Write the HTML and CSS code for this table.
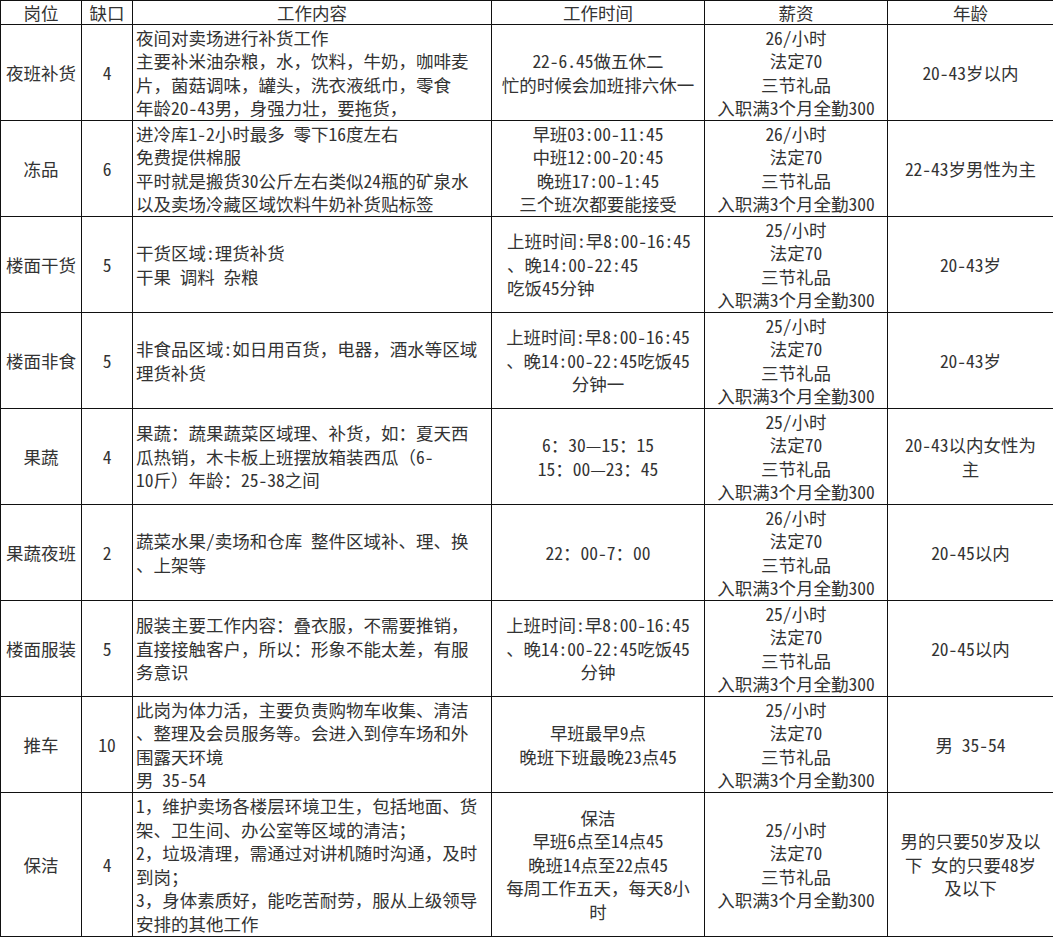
FILE: index.html
```html
<!DOCTYPE html>
<html lang="zh-CN">
<head>
<meta charset="utf-8">
<title>岗位招聘</title>
<link rel="stylesheet" href="styles.css">
</head>
<body>
<table class="sheet">
  <colgroup>
    <col class="c-pos">
    <col class="c-num">
    <col class="c-job">
    <col class="c-time">
    <col class="c-pay">
    <col class="c-age">
  </colgroup>
  <thead>
    <tr class="head">
      <th>岗位</th><th>缺口</th><th>工作内容</th><th>工作时间</th><th>薪资</th><th>年龄</th>
    </tr>
  </thead>
  <tbody>
    <tr class="row">
      <td class="ctr">夜班补货</td>
      <td class="ctr">4</td>
      <td class="left">夜间对卖场进行补货工作<br>主要补米油杂粮，水，饮料，牛奶，咖啡麦<br>片，菌菇调味，罐头，洗衣液纸巾，零食<br>年龄20-43男，身强力壮，要拖货，</td>
      <td class="ctr">22-6.45做五休二<br>忙的时候会加班排六休一</td>
      <td class="ctr">26/小时<br>法定70<br>三节礼品<br>入职满3个月全勤300</td>
      <td class="ctr">20-43岁以内</td>
    </tr>
    <tr class="row">
      <td class="ctr">冻品</td>
      <td class="ctr">6</td>
      <td class="left">进冷库1-2小时最多 零下16度左右<br>免费提供棉服<br>平时就是搬货30公斤左右类似24瓶的矿泉水<br>以及卖场冷藏区域饮料牛奶补货贴标签</td>
      <td class="ctr">早班03:00-11:45<br>中班12:00-20:45<br>晚班17:00-1:45<br>三个班次都要能接受</td>
      <td class="ctr">26/小时<br>法定70<br>三节礼品<br>入职满3个月全勤300</td>
      <td class="ctr">22-43岁男性为主</td>
    </tr>
    <tr class="row">
      <td class="ctr">楼面干货</td>
      <td class="ctr">5</td>
      <td class="left">干货区域:理货补货<br>干果 调料 杂粮</td>
      <td class="indent">上班时间:早8:00-16:45<br>、晚14:00-22:45<br>吃饭45分钟</td>
      <td class="ctr">25/小时<br>法定70<br>三节礼品<br>入职满3个月全勤300</td>
      <td class="ctr">20-43岁</td>
    </tr>
    <tr class="row">
      <td class="ctr">楼面非食</td>
      <td class="ctr">5</td>
      <td class="left">非食品区域:如日用百货，电器，酒水等区域<br>理货补货</td>
      <td class="ctr">上班时间:早8:00-16:45<br>、晚14:00-22:45吃饭45<br>分钟一</td>
      <td class="ctr">25/小时<br>法定70<br>三节礼品<br>入职满3个月全勤300</td>
      <td class="ctr">20-43岁</td>
    </tr>
    <tr class="row">
      <td class="ctr">果蔬</td>
      <td class="ctr">4</td>
      <td class="left">果蔬：蔬果蔬菜区域理、补货，如：夏天西<br>瓜热销，木卡板上班摆放箱装西瓜（6-<br>10斤）年龄：25-38之间</td>
      <td class="ctr">6：30—15：15<br>15：00—23：45</td>
      <td class="ctr">25/小时<br>法定70<br>三节礼品<br>入职满3个月全勤300</td>
      <td class="ctr">20-43以内女性为<br>主</td>
    </tr>
    <tr class="row">
      <td class="ctr">果蔬夜班</td>
      <td class="ctr">2</td>
      <td class="left">蔬菜水果/卖场和仓库 整件区域补、理、换<br>、上架等</td>
      <td class="ctr">22：00-7：00</td>
      <td class="ctr">26/小时<br>法定70<br>三节礼品<br>入职满3个月全勤300</td>
      <td class="ctr">20-45以内</td>
    </tr>
    <tr class="row">
      <td class="ctr">楼面服装</td>
      <td class="ctr">5</td>
      <td class="left">服装主要工作内容：叠衣服，不需要推销，<br>直接接触客户，所以：形象不能太差，有服<br>务意识</td>
      <td class="ctr">上班时间:早8:00-16:45<br>、晚14:00-22:45吃饭45<br>分钟</td>
      <td class="ctr">25/小时<br>法定70<br>三节礼品<br>入职满3个月全勤300</td>
      <td class="ctr">20-45以内</td>
    </tr>
    <tr class="row">
      <td class="ctr">推车</td>
      <td class="ctr">10</td>
      <td class="left">此岗为体力活，主要负责购物车收集、清洁<br>、整理及会员服务等。会进入到停车场和外<br>围露天环境<br>男 35-54</td>
      <td class="ctr">早班最早9点<br>晚班下班最晚23点45</td>
      <td class="ctr">25/小时<br>法定70<br>三节礼品<br>入职满3个月全勤300</td>
      <td class="ctr">男 35-54</td>
    </tr>
    <tr class="row tall">
      <td class="ctr">保洁</td>
      <td class="ctr">4</td>
      <td class="left">1，维护卖场各楼层环境卫生，包括地面、货<br>架、卫生间、办公室等区域的清洁；<br>2，垃圾清理，需通过对讲机随时沟通，及时<br>到岗；<br>3，身体素质好，能吃苦耐劳，服从上级领导<br>安排的其他工作</td>
      <td class="ctr">保洁<br>早班6点至14点45<br>晚班14点至22点45<br>每周工作五天，每天8小<br>时</td>
      <td class="ctr">25/小时<br>法定70<br>三节礼品<br>入职满3个月全勤300</td>
      <td class="ctr">男的只要50岁及以<br>下 女的只要48岁<br>及以下</td>
    </tr>
  </tbody>
</table>
</body>
</html>
```

FILE: styles.css
```css
html, body {
  margin: 0;
  padding: 0;
  background: #ffffff;
}

.sheet {
  border-collapse: collapse;
  table-layout: fixed;
  width: 1053px;
  font-family: "Noto Sans Mono CJK SC", "Liberation Serif", "Noto Sans CJK SC", monospace;
  font-size: 17.5px;
  font-weight: 400;
  line-height: 23.5px;
  color: #333333;
}

.c-pos { width: 81px; }
.c-num { width: 51px; }
.c-job { width: 359px; }
.c-time { width: 213px; }
.c-pay { width: 183px; }
.c-age { width: 166px; }

.sheet th,
.sheet td {
  border: 1px solid #111111;
  padding: 0;
  vertical-align: middle;
  white-space: nowrap;
  overflow: hidden;
}

.sheet th {
  font-weight: 400;
  text-align: center;
  height: 23px;
  line-height: 22px;
}

.row td {
  height: 95px;
}

.row.tall td {
  height: 143px;
}

.ctr {
  text-align: center;
}

.left {
  text-align: left;
  padding-left: 3px !important;
}

.indent {
  text-align: left;
  padding-left: 15px !important;
}
```
